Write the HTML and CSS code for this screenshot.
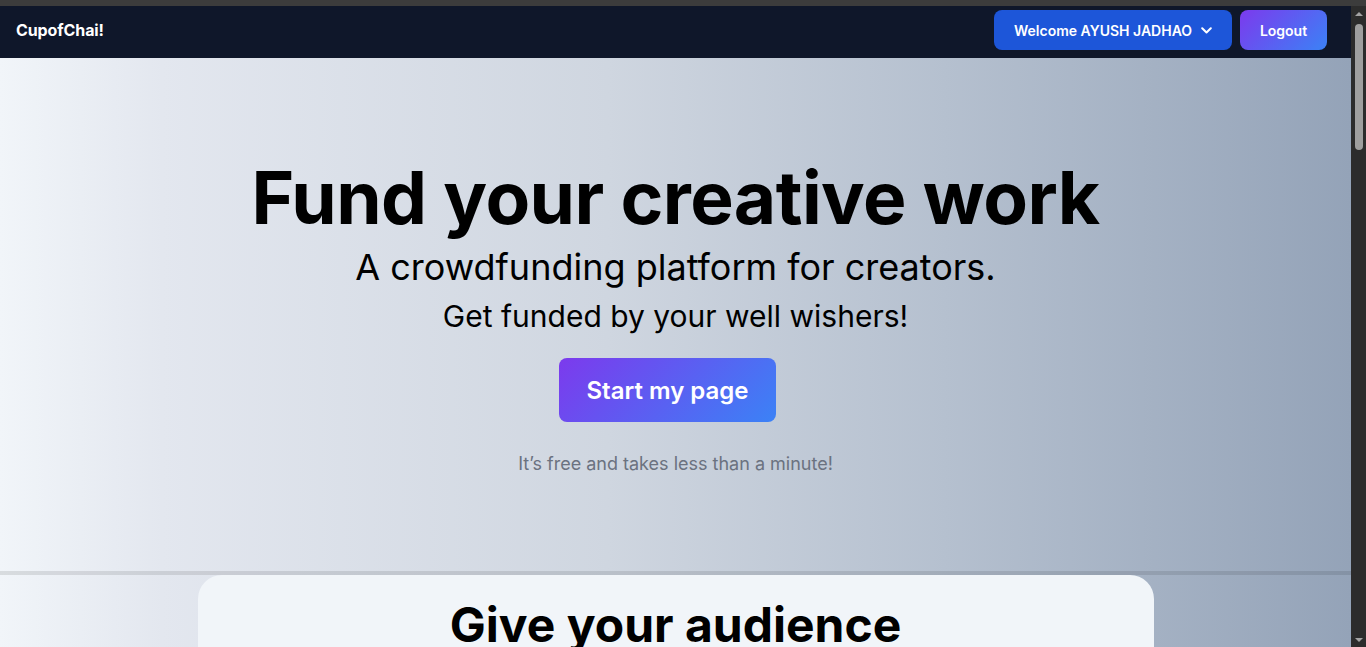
FILE: index.html
```html
<!DOCTYPE html>
<html lang="en">
<head>
<meta charset="utf-8">
<title>CupofChai!</title>
<link rel="stylesheet" href="styles.css">
</head>
<body>
<div class="chrome"></div>
<div class="window">
  <div class="page">
    <nav class="nav">
      <div class="logo">CupofChai!</div>
      <div class="nav-actions">
        <button class="btn-welcome">Welcome AYUSH JADHAO
          <svg class="chev" width="11" height="7" viewBox="0 0 11 7"><path d="M1.2 1.2l4.3 4.3 4.3-4.3" fill="none" stroke="#fff" stroke-width="2" stroke-linecap="round" stroke-linejoin="round"/></svg>
        </button>
        <button class="btn-logout">Logout</button>
      </div>
    </nav>
    <main class="main">
      <section class="hero">
        <h1 class="hero-title">Fund your creative work</h1>
        <p class="hero-sub">A crowdfunding platform for creators.</p>
        <p class="hero-sub2">Get funded by your well wishers!</p>
        <button class="btn-start">Start my page</button>
        <p class="hero-note">It’s free and takes less than a minute!</p>
      </section>
      <div class="divider"></div>
      <section class="features">
        <div class="card">
          <h2 class="card-title">Give your audience</h2>
        </div>
      </section>
    </main>
  </div>
  <div class="scrollbar">
    <div class="arrow-up"></div>
    <div class="thumb"></div>
    <div class="spacer"></div>
    <div class="arrow-down"></div>
  </div>
</div>
</body>
</html>
```

FILE: styles.css
```css
* { box-sizing: border-box; }
html, body { margin: 0; padding: 0; height: 100%; overflow: hidden; }
body { font-family: "Inter", "Liberation Sans", sans-serif; background: #2b2b2b; }

.chrome { height: 6px; background: #3c3c3c; }

.window { display: flex; height: 641px; }
.page { flex: 1; min-width: 0; overflow: hidden; display: flex; flex-direction: column; }

.nav {
  height: 52px; flex: none;
  background: #0f172a;
  display: flex; align-items: center; justify-content: space-between;
  padding: 0 24px 0 16px;
}
.logo { color: #fff; font-weight: 700; font-size: 16px; letter-spacing: -0.1px; margin-top: -4px; }
.nav-actions { display: flex; gap: 8px; margin-top: -4px; }
.nav-actions button {
  font-family: inherit; border: 0; color: #fff; font-size: 14px; font-weight: 600;
  height: 40px; border-radius: 8px; cursor: pointer; display: flex; align-items: center;
}
.btn-welcome { background: #1d56d9; width: 238px; padding: 0 20px; justify-content: space-between; }
.btn-logout { background: linear-gradient(135deg, #7c3aed, #3b82f6); padding: 0 20px; width: 87px; justify-content: center; }

.main {
  flex: 1;
  background: linear-gradient(to right, #f1f5f9 0%, #e3e7ef 12%, #cfd6e0 45%, #b5c0cf 70%, #94a3b8 100%);
}

.hero { height: 513px; display: flex; flex-direction: column; align-items: center; padding-top: 103px; text-align: center; }
.hero-title { margin: 0; font-size: 73px; line-height: 1; font-weight: 700; color: #000; letter-spacing: -0.55px; }
.hero-sub { margin: 13px 0 0; font-size: 36px; line-height: 40px; font-weight: 400; color: #000; }
.hero-sub2 { margin: 11px 0 0; font-size: 30px; line-height: 36px; font-weight: 400; color: #000; }
.btn-start {
  margin: 24px 16px 0 0; width: 217px; height: 64px; border: 0; border-radius: 8px;
  background: linear-gradient(135deg, #7c3aed, #3b82f6);
  color: #fff; font-family: inherit; font-size: 24px; font-weight: 600;
}
.hero-note { margin: 28px 0 0; font-size: 18px; line-height: 28px; color: #6b7280; }

.divider { height: 4px; background: rgba(0, 0, 0, 0.1); }

.features { display: flex; justify-content: center; }
.card {
  width: 956px; height: 200px; background: #f1f5f9; border-radius: 24px;
  padding-top: 26px; text-align: center;
}
.card-title { margin: 0; font-size: 48px; line-height: 1; font-weight: 700; color: #000; }

.scrollbar { width: 15px; flex: none; background: #2c2c2c; display: flex; flex-direction: column; align-items: center; }
.arrow-up { margin-top: 6px; width: 0; height: 0; border-left: 4px solid transparent; border-right: 4px solid transparent; border-bottom: 4px solid #a3a3a3; }
.thumb { margin-top: 8px; width: 8px; height: 126px; border-radius: 4px; background: #9f9f9f; }
.spacer { flex: 1; }
.arrow-down { margin-bottom: 5px; width: 0; height: 0; border-left: 4px solid transparent; border-right: 4px solid transparent; border-top: 4px solid #a3a3a3; }
```
